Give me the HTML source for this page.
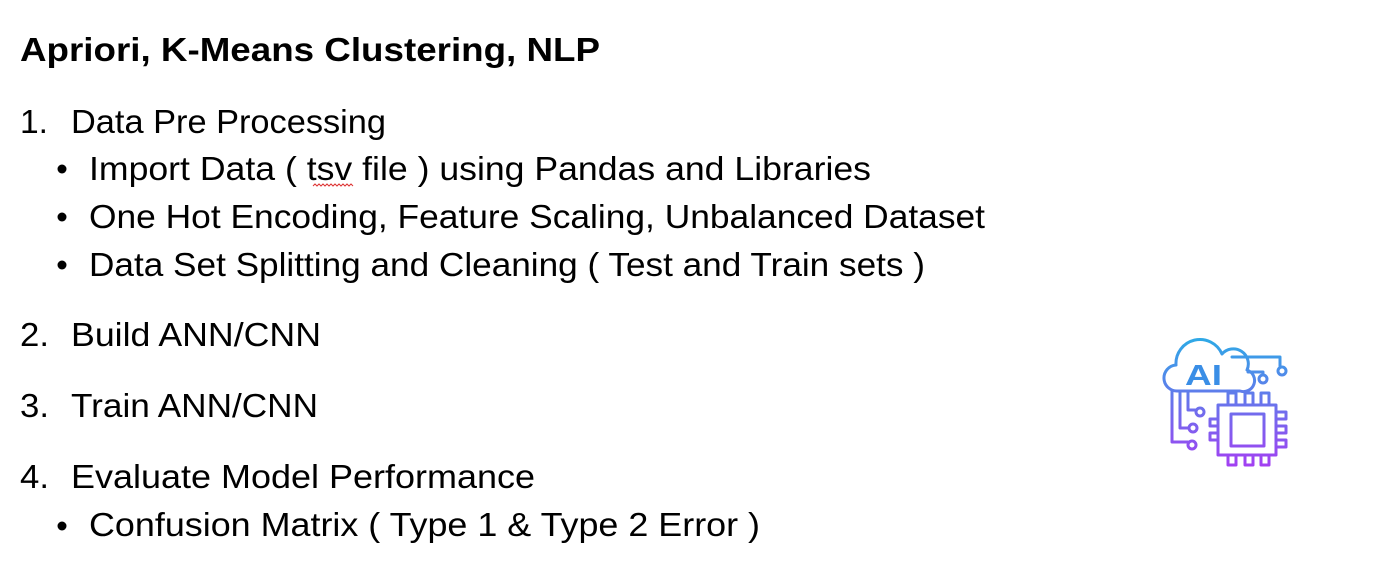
<!DOCTYPE html>
<html><head><meta charset="utf-8"><style>
html,body{margin:0;padding:0;background:#fff;width:1382px;height:582px;overflow:hidden}
svg text{font-family:"Liberation Sans",Arial,sans-serif;fill:#000}
</style></head><body>
<svg width="1382" height="582" viewBox="0 0 1382 582" xmlns="http://www.w3.org/2000/svg">
<defs><linearGradient id="g" x1="0" y1="340" x2="0" y2="467" gradientUnits="userSpaceOnUse">
<stop offset="0" stop-color="#2fa8e6"/><stop offset="1" stop-color="#a33ff2"/></linearGradient></defs>
<text x="20" y="61" font-size="33" font-weight="bold" textLength="580" lengthAdjust="spacingAndGlyphs">Apriori, K-Means Clustering, NLP</text>
<g font-size="33">
<text x="20" y="133" textLength="28" lengthAdjust="spacingAndGlyphs">1.</text>
<text x="71" y="133" textLength="315" lengthAdjust="spacingAndGlyphs">Data Pre Processing</text>
<circle cx="62" cy="169" r="4.5"/><text x="89" y="180" textLength="782" lengthAdjust="spacingAndGlyphs">Import Data ( tsv file ) using Pandas and Libraries</text>
<circle cx="62" cy="217" r="4.5"/><text x="89" y="228" textLength="896" lengthAdjust="spacingAndGlyphs">One Hot Encoding, Feature Scaling, Unbalanced Dataset</text>
<circle cx="62" cy="265" r="4.5"/><text x="89" y="276" textLength="836" lengthAdjust="spacingAndGlyphs">Data Set Splitting and Cleaning ( Test and Train sets )</text>
<text x="20" y="346" textLength="29" lengthAdjust="spacingAndGlyphs">2.</text>
<text x="71" y="346" textLength="250" lengthAdjust="spacingAndGlyphs">Build ANN/CNN</text>
<text x="20" y="417" textLength="29" lengthAdjust="spacingAndGlyphs">3.</text>
<text x="71" y="417" textLength="247" lengthAdjust="spacingAndGlyphs">Train ANN/CNN</text>
<text x="20" y="488" textLength="29" lengthAdjust="spacingAndGlyphs">4.</text>
<text x="71" y="488" textLength="464" lengthAdjust="spacingAndGlyphs">Evaluate Model Performance</text>
<circle cx="62" cy="526" r="4.5"/><text x="89" y="536" textLength="671" lengthAdjust="spacingAndGlyphs">Confusion Matrix ( Type 1 &amp; Type 2 Error )</text>
</g>
<path d="M313 186 l2 -2 l2 2 l2 -2 l2 2 l2 -2 l2 2 l2 -2 l2 2 l2 -2 l2 2 l2 -2 l2 2 l2 -2 l2 2 l2 -2 l2 2 l2 -2 l2 2 l2 -2 l2 2" stroke="#d33" stroke-width="1" fill="none"/>
<g stroke="url(#g)" stroke-width="3" fill="none" stroke-linecap="round" stroke-linejoin="round">
<path d="M1178 391 A13 13 0 0 1 1176 365 A24 24 0 0 1 1222 354 A15 15 0 0 1 1247 370 A11 11 0 0 1 1240 391 Z"/>
<path d="M1232 357 h48 v9"/><circle cx="1282" cy="371" r="4"/>
<path d="M1248 372 h15 v3"/><circle cx="1263" cy="379" r="4"/>
<path d="M1172 391 v51 h16"/><circle cx="1192" cy="445" r="4"/>
<path d="M1180 391 v37 h9"/><circle cx="1193" cy="428" r="4"/>
<path d="M1188 391 v19 h8"/><circle cx="1200" cy="412" r="4"/>
<rect x="1218" y="405" width="58" height="50"/>
<rect x="1231" y="414" width="33" height="32"/>
<path d="M1228 405 v-12 h8 v12 M1245 405 v-12 h8 v12 M1261 405 v-12 h8 v12"/>
<path d="M1228 455 v10 h8 v-10 M1245 455 v10 h8 v-10 M1261 455 v10 h8 v-10"/>
<path d="M1276 412 h10 v7 h-10 M1276 426 h10 v7 h-10 M1276 440 h10 v7 h-10"/>
<path d="M1218 419 h-8 v7 h8 M1218 433 h-8 v7 h8"/>
</g>
<text x="1185" y="385" font-size="29" font-weight="bold" style="fill:#3a8ee6" font-family="Liberation Mono" textLength="37" lengthAdjust="spacingAndGlyphs">AI</text>
</svg>
</body></html>
